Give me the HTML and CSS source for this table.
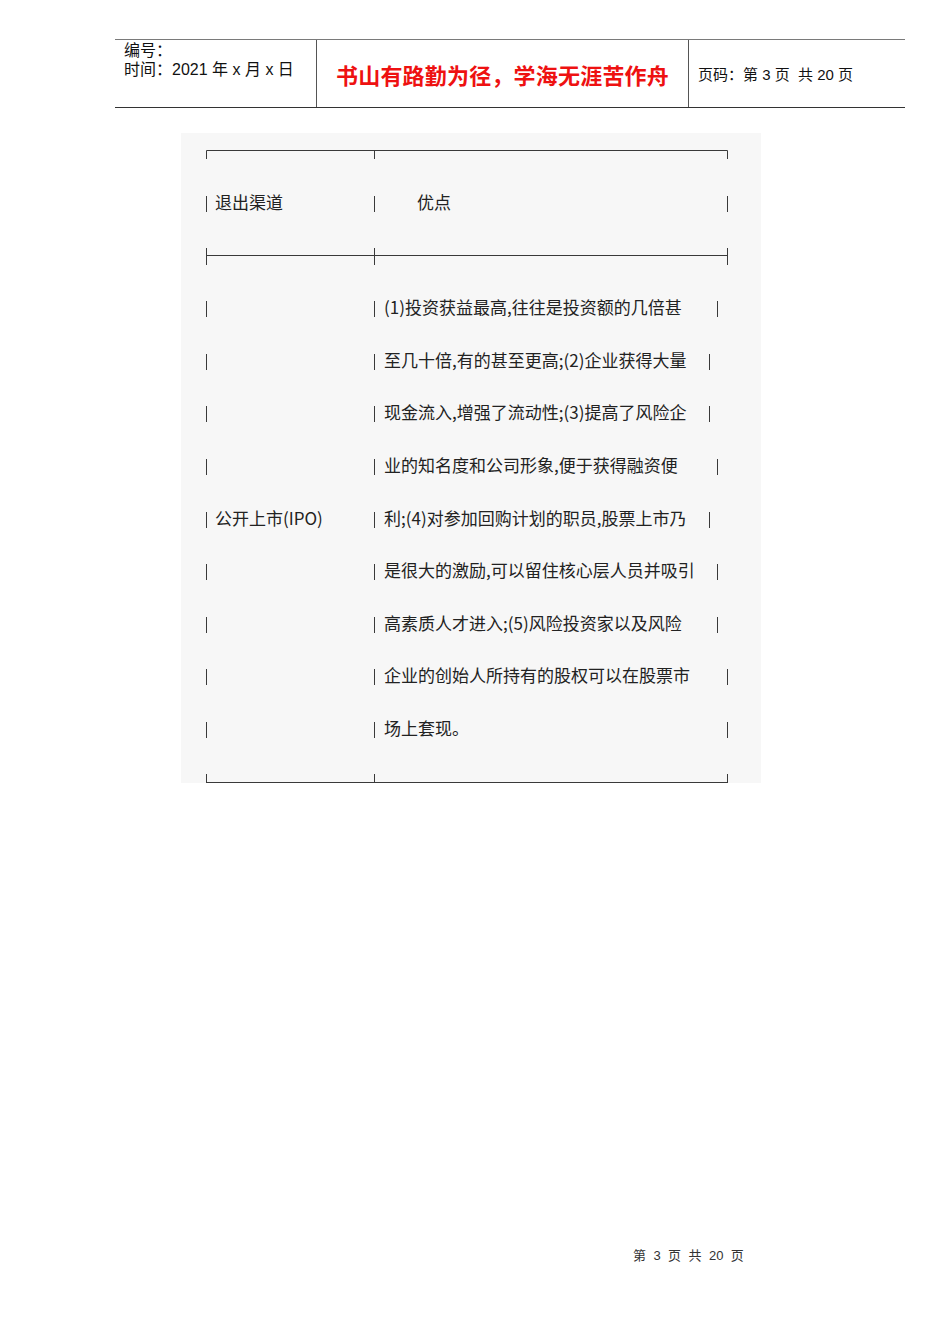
FILE: index.html
```html
<!DOCTYPE html>
<html lang="zh-CN">
<head>
<meta charset="utf-8">
<title>退出渠道</title>
<link rel="stylesheet" href="styles.css">
</head>
<body>
<div class="page">
  <header class="doc-head">
    <div class="hc hc-meta">
      <div>编号：</div>
      <div>时间：2021 年 x 月 x 日</div>
    </div>
    <div class="hc hc-title">书山有路勤为径，学海无涯苦作舟</div>
    <div class="hc hc-page">页码：第 3 页&nbsp;&nbsp;共 20 页</div>
  </header>

  <section class="sheet">
    <svg class="rule" width="522" height="9" viewBox="0 0 522 9"><path d="M0.5 9V0.5H521.5V9M168.5 0.5V9" stroke="#3a3a3a" fill="none"/></svg>

    <div class="row row-head">
      <div class="c1"><span class="bar"></span><span class="txt">退出渠道</span></div>
      <div class="c2 end-727"><span class="bar"></span><span class="txt head-txt">优点</span><span class="bar rbar"></span></div>
    </div>

    <svg class="rule" width="522" height="17" viewBox="0 0 522 17"><path d="M0 7.5H522M0.5 0V17M168.5 0V17M521.5 0V17" stroke="#3a3a3a" fill="none"/></svg>

    <div class="body">
      <div class="row">
        <div class="c1"><span class="bar"></span></div>
        <div class="c2 end-717"><span class="bar"></span><span class="txt">(1)投资获益最高,往往是投资额的几倍甚</span><span class="bar rbar"></span></div>
      </div>
      <div class="row">
        <div class="c1"><span class="bar"></span></div>
        <div class="c2 end-709"><span class="bar"></span><span class="txt">至几十倍,有的甚至更高;(2)企业获得大量</span><span class="bar rbar"></span></div>
      </div>
      <div class="row">
        <div class="c1"><span class="bar"></span></div>
        <div class="c2 end-709"><span class="bar"></span><span class="txt">现金流入,增强了流动性;(3)提高了风险企</span><span class="bar rbar"></span></div>
      </div>
      <div class="row">
        <div class="c1"><span class="bar"></span></div>
        <div class="c2 end-717"><span class="bar"></span><span class="txt">业的知名度和公司形象,便于获得融资便</span><span class="bar rbar"></span></div>
      </div>
      <div class="row">
        <div class="c1"><span class="bar"></span><span class="txt">公开上市(IPO)</span></div>
        <div class="c2 end-709"><span class="bar"></span><span class="txt">利;(4)对参加回购计划的职员,股票上市乃</span><span class="bar rbar"></span></div>
      </div>
      <div class="row">
        <div class="c1"><span class="bar"></span></div>
        <div class="c2 end-717"><span class="bar"></span><span class="txt">是很大的激励,可以留住核心层人员并吸引</span><span class="bar rbar"></span></div>
      </div>
      <div class="row">
        <div class="c1"><span class="bar"></span></div>
        <div class="c2 end-717"><span class="bar"></span><span class="txt">高素质人才进入;(5)风险投资家以及风险</span><span class="bar rbar"></span></div>
      </div>
      <div class="row">
        <div class="c1"><span class="bar"></span></div>
        <div class="c2 end-727"><span class="bar"></span><span class="txt">企业的创始人所持有的股权可以在股票市</span><span class="bar rbar"></span></div>
      </div>
      <div class="row">
        <div class="c1"><span class="bar"></span></div>
        <div class="c2 end-727"><span class="bar"></span><span class="txt">场上套现。</span><span class="bar rbar"></span></div>
      </div>
    </div>

    <svg class="rule rule-bottom" width="522" height="9" viewBox="0 0 522 9"><path d="M0 8.5H522M0.5 0V9M168.5 0V9M521.5 0V9" stroke="#3a3a3a" fill="none"/></svg>
  </section>

  <footer class="doc-foot">第&nbsp; 3&nbsp; 页&nbsp; 共&nbsp; 20&nbsp; 页</footer>
</div>
</body>
</html>
```

FILE: styles.css
```css
html, body {
  margin: 0;
  padding: 0;
  background: #ffffff;
}

body {
  font-family: "Liberation Sans", "Noto Sans CJK SC", sans-serif;
  color: #000;
}

.page {
  width: 950px;
  height: 1344px;
  display: flex;
  flex-direction: column;
}

/* ---------- header ---------- */
.doc-head {
  margin: 39px 0 0 115px;
  width: 790px;
  height: 67px;
  display: flex;
  border-top: 1px solid #7a7a7a;
  border-bottom: 1px solid #333;
}

.hc {
  box-sizing: border-box;
}

.hc-meta {
  width: 201px;
  padding: 1px 0 0 9px;
  font-size: 16px;
  line-height: 19px;
  color: #111;
}

.hc-title {
  width: 373px;
  border-left: 1px solid #555;
  border-right: 1px solid #555;
  display: flex;
  align-items: center;
  justify-content: center;
  padding-top: 1px;
  font-family: "Noto Sans CJK SC", sans-serif;
  font-size: 22px;
  font-weight: 700;
  letter-spacing: 0.2px;
  color: #ee1111;
}

.hc-page {
  flex: 1;
  display: flex;
  align-items: center;
  padding: 0 0 0 9px;
  font-size: 15px;
  color: #111;
}

/* ---------- sheet ---------- */
.sheet {
  margin: 25px 0 0 181px;
  width: 580px;
  box-sizing: border-box;
  padding: 17px 0 0 25px;
  background: #f7f7f7;
  display: flex;
  flex-direction: column;
  align-items: flex-start;
  font-family: "Noto Sans CJK SC", sans-serif;
  font-size: 17px;
  color: #222;
}

.rule {
  display: block;
}

.row {
  display: flex;
  align-items: center;
  height: 52.6px;
}

.row-head {
  height: 89px;
}

.body {
  padding-top: 18px;
}

.rule-bottom {
  margin-top: 18px;
}

.c1 {
  width: 168px;
  display: flex;
  align-items: center;
}

.c2 {
  display: flex;
  align-items: center;
}

.end-727 { width: 354px; }
.end-717 { width: 344px; }
.end-709 { width: 336px; }

.bar {
  display: block;
  width: 1px;
  height: 16px;
  background: #3a3a3a;
  flex: none;
}

.rbar {
  margin-left: auto;
}

.txt {
  margin-left: 9px;
  padding-bottom: 4px;
  white-space: nowrap;
  line-height: 20px;
}

.c1 .txt {
  margin-left: 8px;
}

.head-txt {
  margin-left: 42px;
}

/* ---------- footer ---------- */
.doc-foot {
  margin: 465px 0 0 633px;
  font-size: 13px;
  line-height: 16px;
  word-spacing: 0.1px;
  color: #333;
}
```
